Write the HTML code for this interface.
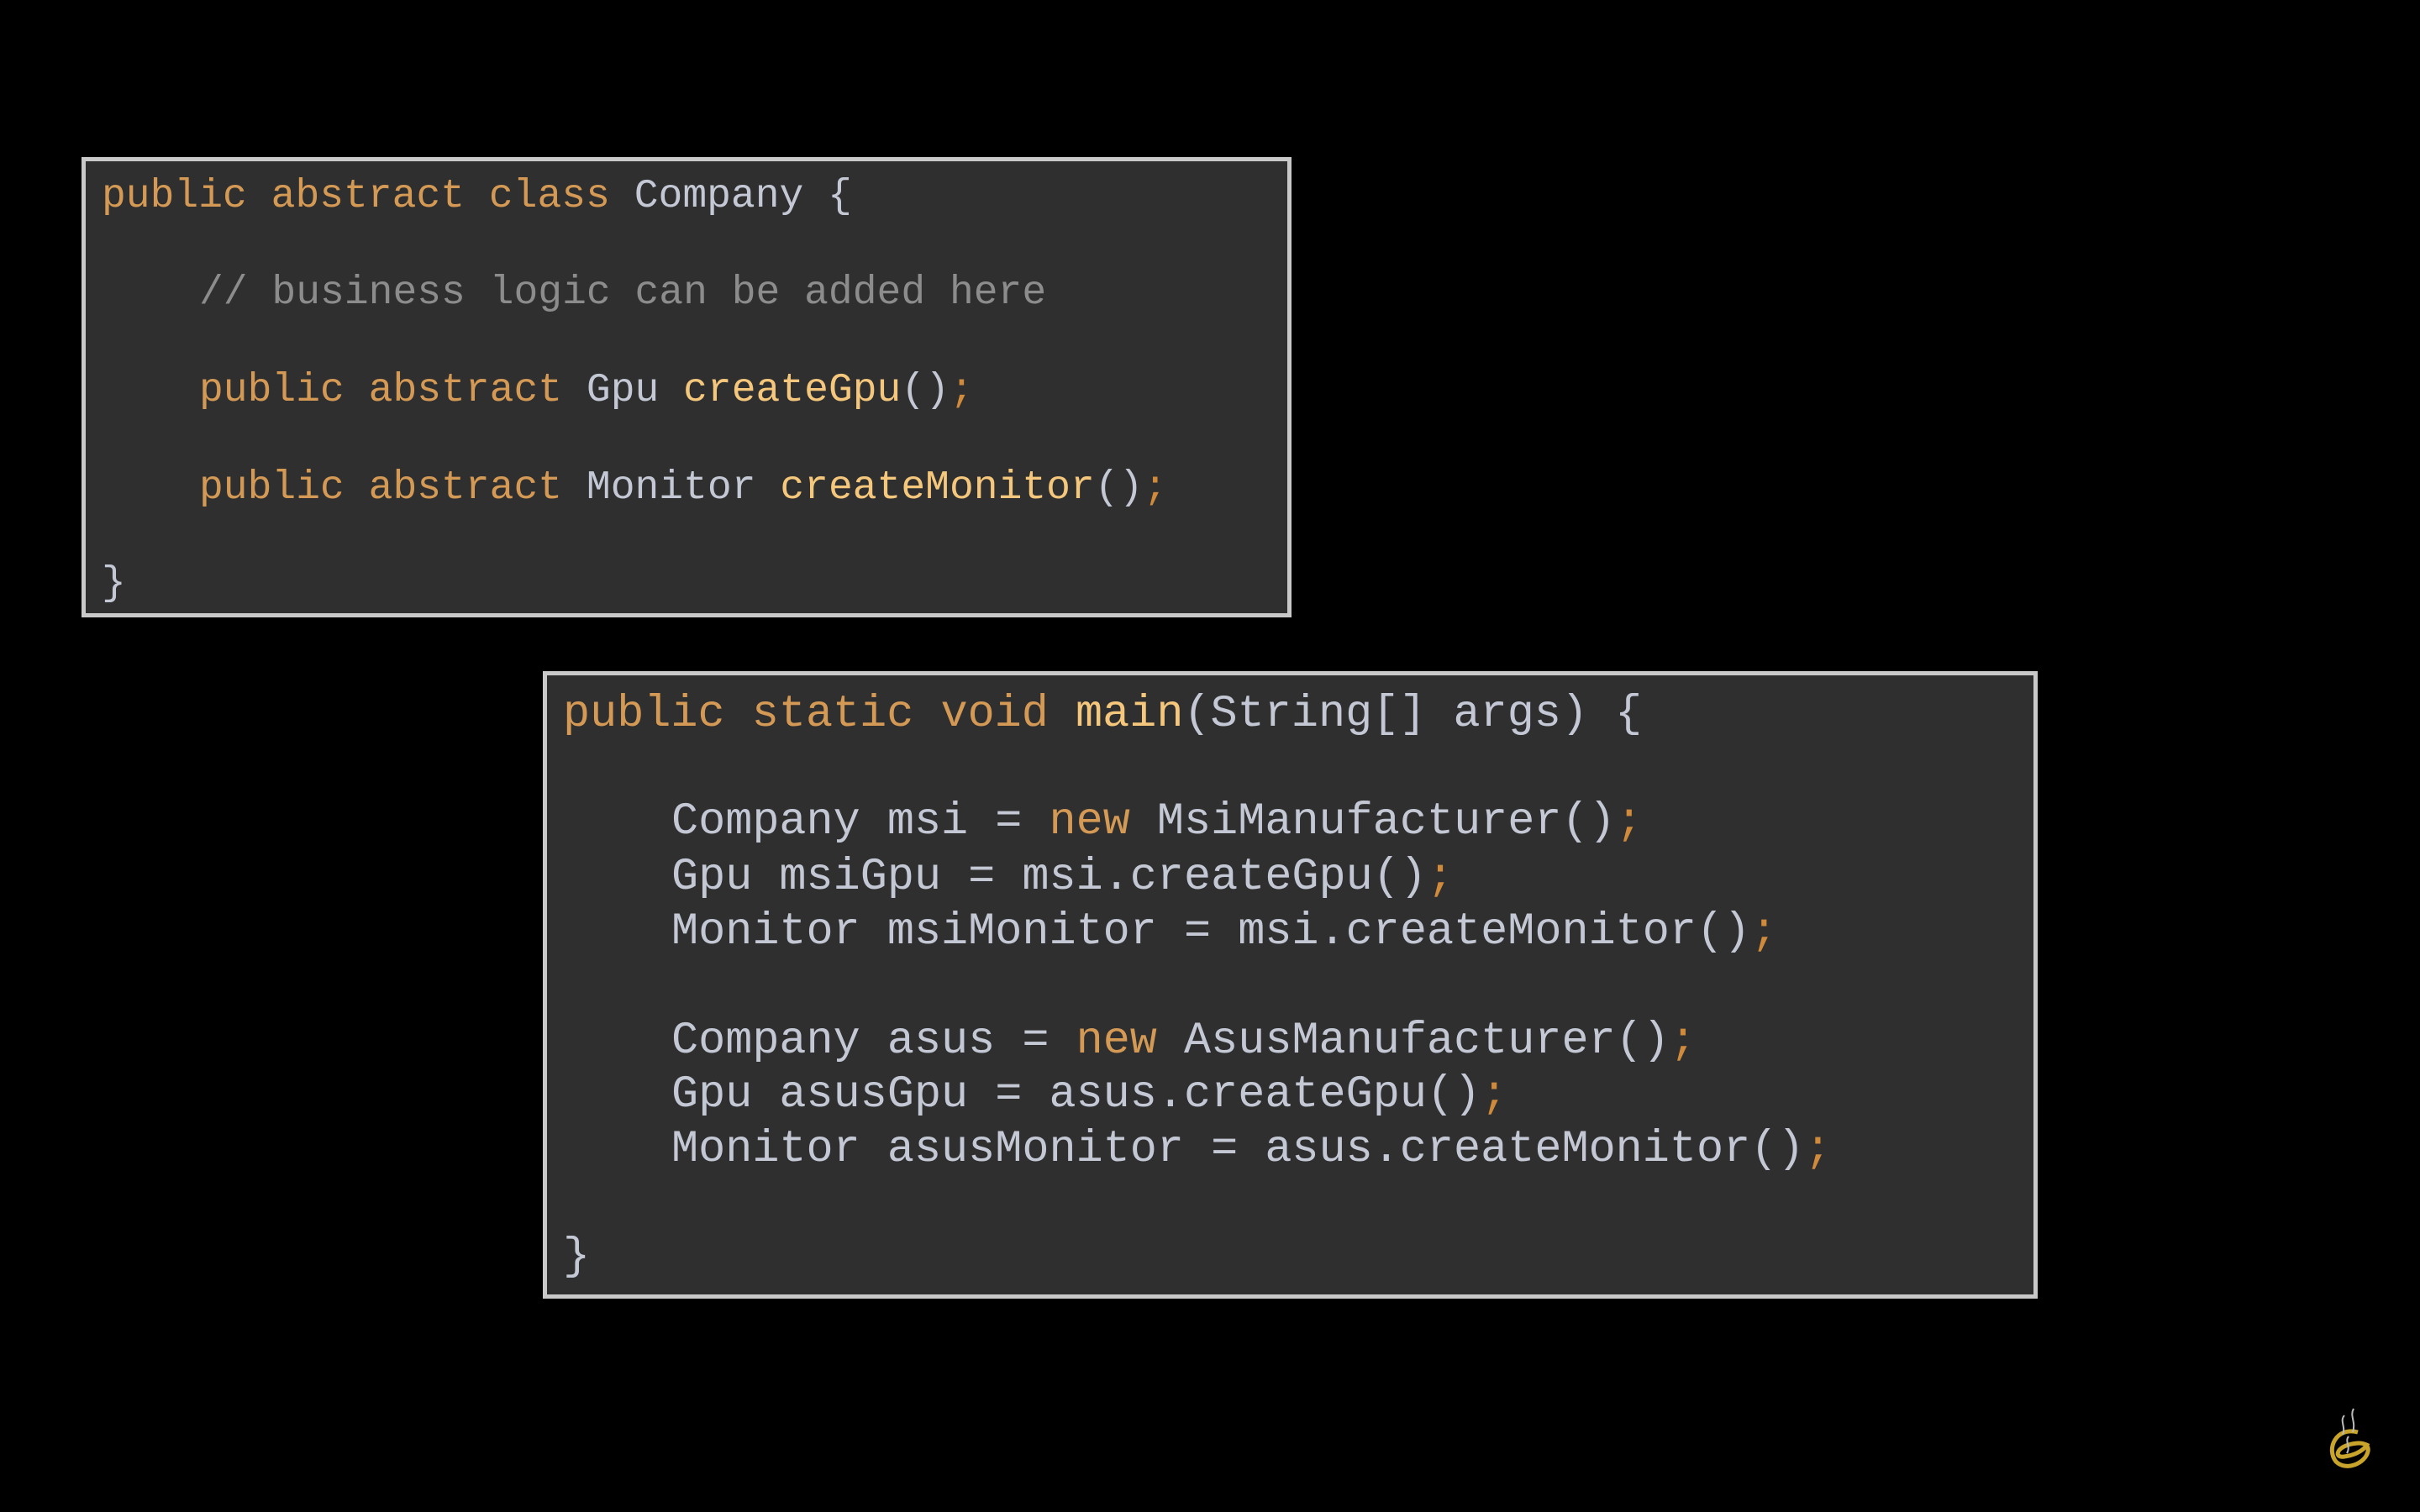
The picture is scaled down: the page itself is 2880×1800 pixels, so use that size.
<!DOCTYPE html>
<html><head><meta charset="utf-8"><style>
html,body{margin:0;padding:0;background:#000;width:2880px;height:1800px;overflow:hidden}
.box{position:absolute;background:#2f2f2f;border:5px solid #c9c9c9;box-sizing:border-box}
.l{position:absolute;white-space:pre;font-family:"Liberation Mono",monospace;color:#c4c8d4;height:60px;line-height:60px;margin-top:4px}
.b1 .l{font-size:48px}
.b2 .l{font-size:53.5px}
.k{color:#d49a55}.m{color:#f4c77c}.c{color:#8c8c8c}.s{color:#d08a3c}
</style></head><body>
<div class="box" style="left:97px;top:187px;width:1440px;height:548px"></div>
<div class="b1">
<div class="l" style="left:121px;top:200px"><span class="k">public abstract class</span> Company {</div>
<div class="l" style="left:237px;top:315px"><span class="c">// business logic can be added here</span></div>
<div class="l" style="left:237px;top:431px"><span class="k">public abstract</span> Gpu <span class="m">createGpu</span>()<span class="s">;</span></div>
<div class="l" style="left:237px;top:547px"><span class="k">public abstract</span> Monitor <span class="m">createMonitor</span>()<span class="s">;</span></div>
<div class="l" style="left:121px;top:661px">}</div>
</div>
<div class="box" style="left:646px;top:799px;width:1779px;height:747px"></div>
<div class="b2">
<div class="l" style="left:670px;top:817px"><span class="k">public static void</span> <span class="m">main</span>(String[] args) {</div>
<div class="l" style="left:799px;top:945px">Company msi = <span class="k">new</span> MsiManufacturer()<span class="s">;</span></div>
<div class="l" style="left:799px;top:1011px">Gpu msiGpu = msi.createGpu()<span class="s">;</span></div>
<div class="l" style="left:799px;top:1076px">Monitor msiMonitor = msi.createMonitor()<span class="s">;</span></div>
<div class="l" style="left:799px;top:1206px">Company asus = <span class="k">new</span> AsusManufacturer()<span class="s">;</span></div>
<div class="l" style="left:799px;top:1270px">Gpu asusGpu = asus.createGpu()<span class="s">;</span></div>
<div class="l" style="left:799px;top:1335px">Monitor asusMonitor = asus.createMonitor()<span class="s">;</span></div>
<div class="l" style="left:670px;top:1463px">}</div>
</div>
<svg style="position:absolute;left:2740px;top:1660px" width="120" height="120" viewBox="0 0 120 120">
<path d="M66 45 C40 38 28 65 40 80 C52 92 75 82 78 68 C80 58 70 56 55 60 C40 64 38 76 50 74 C65 72 75 65 78 58" fill="none" stroke="#c9a42a" stroke-width="5"/>
<path d="M50 25 C44 32 52 38 48 48 M61 17 C56 26 64 32 60 45 M55 50 C50 56 58 62 53 70" fill="none" stroke="#bbb" stroke-width="2"/>
</svg>
</body></html>
